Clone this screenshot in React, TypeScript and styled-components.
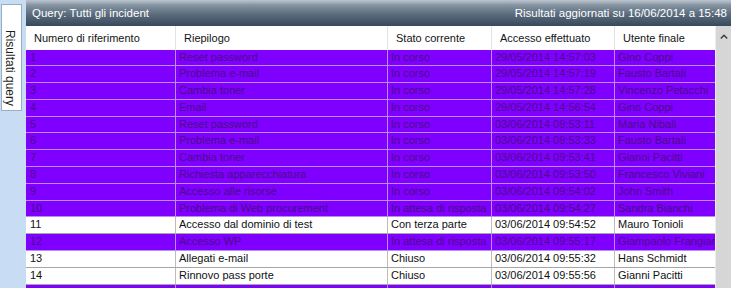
import React from 'react';
import styled, {createGlobalStyle} from "styled-components";

const GlobalStyle = createGlobalStyle`
  html, body {
    margin: 0;
    padding: 0;
    overflow: hidden;
    background: #ffffff;
  }
  body {
    font-family: "Liberation Sans", Arial, sans-serif;
  }
`

type Incident = {
    id: number
    summary: string
    state: string
    access: string
    user: string
    hl: boolean
}

const incidents: Incident[] = [
    {id: 1, summary: "Reset password", state: "In corso", access: "29/05/2014 14:57:03", user: "Gino Coppi", hl: true},
    {id: 2, summary: "Problema e-mail", state: "In corso", access: "29/05/2014 14:57:19", user: "Fausto Bartali", hl: true},
    {id: 3, summary: "Cambia toner", state: "In corso", access: "29/05/2014 14:57:28", user: "Vincenzo Petacchi", hl: true},
    {id: 4, summary: "Email", state: "In corso", access: "29/05/2014 14:56:54", user: "Gino Coppi", hl: true},
    {id: 5, summary: "Reset password", state: "In corso", access: "03/06/2014 09:53:11", user: "Maria Nibali", hl: true},
    {id: 6, summary: "Problema e-mail", state: "In corso", access: "03/06/2014 09:53:33", user: "Fausto Bartali", hl: true},
    {id: 7, summary: "Cambia toner", state: "In corso", access: "03/06/2014 09:53:41", user: "Gianni Pacitti", hl: true},
    {id: 8, summary: "Richiesta apparecchiatura", state: "In corso", access: "03/06/2014 09:53:50", user: "Francesco Viviani", hl: true},
    {id: 9, summary: "Accesso alle risorse", state: "In corso", access: "03/06/2014 09:54:02", user: "John Smith", hl: true},
    {id: 10, summary: "Problema di Web procurement", state: "In attesa di risposta", access: "03/06/2014 09:54:27", user: "Sandra Bianchi", hl: true},
    {id: 11, summary: "Accesso dal dominio di test", state: "Con terza parte", access: "03/06/2014 09:54:52", user: "Mauro Tonioli", hl: false},
    {id: 12, summary: "Accesso WP", state: "In attesa di risposta", access: "03/06/2014 09:55:17", user: "Giampaolo Frangiam", hl: true},
    {id: 13, summary: "Allegati e-mail", state: "Chiuso", access: "03/06/2014 09:55:32", user: "Hans Schmidt", hl: false},
    {id: 14, summary: "Rinnovo pass porte", state: "Chiuso", access: "03/06/2014 09:55:56", user: "Gianni Pacitti", hl: false},
]

const columns = ["Numero di riferimento", "Riepilogo", "Stato corrente", "Accesso effettuato", "Utente finale"]

export default function App() {
    return (
        <>
            <GlobalStyle/>
            <Shell>
                <SideBar>
                    <Tab>Risultati query</Tab>
                </SideBar>
                <Panel>
                    <TitleBar>
                        <span>Query: Tutti gli incident</span>
                        <span>Risultati aggiornati su 16/06/2014 a 15:48</span>
                    </TitleBar>
                    <Body>
                        <Grid>
                            <HeaderRow>
                                {columns.map(c => <HeaderCell key={c}>{c}</HeaderCell>)}
                            </HeaderRow>
                            {incidents.map(r => (
                                <Row key={r.id} $hl={r.hl}>
                                    <Cell $hl={r.hl}>{r.id}</Cell>
                                    <Cell $hl={r.hl}>{r.summary}</Cell>
                                    <Cell $hl={r.hl}>{r.state}</Cell>
                                    <Cell $hl={r.hl}>{r.access}</Cell>
                                    <Cell $hl={r.hl}>{r.user}</Cell>
                                </Row>
                            ))}
                            {/* next row, only its top edge shows */}
                            <Row $hl>
                                {columns.map(c => <Cell key={c} $hl/>)}
                            </Row>
                        </Grid>
                        <ScrollBar>
                            <ArrowButton>
                                <svg width="8" height="5" viewBox="0 0 8 5">
                                    <path d="M0.8 4.4 L4 1.2 L7.2 4.4" fill="none" stroke="#3a3a3a" strokeWidth="1.4"/>
                                </svg>
                            </ArrowButton>
                        </ScrollBar>
                    </Body>
                </Panel>
            </Shell>
        </>
    );
}

const Shell = styled.div`
  display: flex;
  width: 731px;
  height: 288px;
  overflow: hidden;
`
const SideBar = styled.div`
  width: 26px;
  flex-shrink: 0;
  background: #c8dcf4;
  padding: 4px 0 0 1px;
  box-sizing: border-box;
`
const Tab = styled.div`
  width: 21px;
  height: 107px;
  box-sizing: border-box;
  background: #ffffff;
  border: 1px solid #97adc8;
  writing-mode: vertical-rl;
  padding-top: 25px;
  padding-right: 2px;
  font-size: 12px;
  color: #1e1e1e;
  line-height: 18px;
`
const Panel = styled.div`
  flex: 1;
  display: flex;
  flex-direction: column;
  min-width: 0;
`
const TitleBar = styled.div`
  height: 26px;
  flex-shrink: 0;
  display: flex;
  align-items: center;
  justify-content: space-between;
  padding: 0 4px 0 6px;
  background: linear-gradient(to bottom, #bcc6d0 0%, #8593a1 20%, #5b6c7d 55%, #37495c 100%);
  color: #ffffff;
  font-size: 11.5px;
`
const Body = styled.div`
  flex: 1;
  display: flex;
  min-height: 0;
`
const Grid = styled.div`
  width: 689px;
  flex-shrink: 0;
  background: #ffffff;
  overflow: hidden;
`
const cols = "150px 212px 104px 123px 100px"

const HeaderRow = styled.div`
  display: grid;
  grid-template-columns: ${cols};
  height: 23.5px;
  background: #ffffff;
`
const HeaderCell = styled.div`
  display: flex;
  align-items: center;
  padding-left: 8px;
  border-right: 1px solid #e3e3e3;
  font-size: 11px;
  color: #141414;
  white-space: nowrap;
  overflow: hidden;

  &:last-child {
    border-right: none;
  }
`
const Row = styled.div<{ $hl: boolean }>`
  display: grid;
  grid-template-columns: ${cols};
  height: 16.8px;
  box-sizing: border-box;
  background: ${p => p.$hl ? "#8000ff" : "#ffffff"};
  border-bottom: 1px solid ${p => p.$hl ? "#b98cf2" : "#a6a6a6"};
`
const Cell = styled.div<{ $hl: boolean }>`
  padding-left: 3px;
  border-right: 1px solid ${p => p.$hl ? "#b98cf2" : "#bdbdbd"};
  font-size: 11px;
  line-height: 15.8px;
  color: ${p => p.$hl ? "#4a0c86" : "#111111"};
  white-space: nowrap;
  overflow: hidden;

  &:first-child {
    padding-left: 4px;
  }
  &:last-child {
    border-right: none;
  }
`
const ScrollBar = styled.div`
  width: 16px;
  flex-shrink: 0;
  background: #d6d6d6;
  border-left: 1px solid #ececec;
`
const ArrowButton = styled.div`
  height: 20px;
  display: flex;
  align-items: center;
  justify-content: center;
`
